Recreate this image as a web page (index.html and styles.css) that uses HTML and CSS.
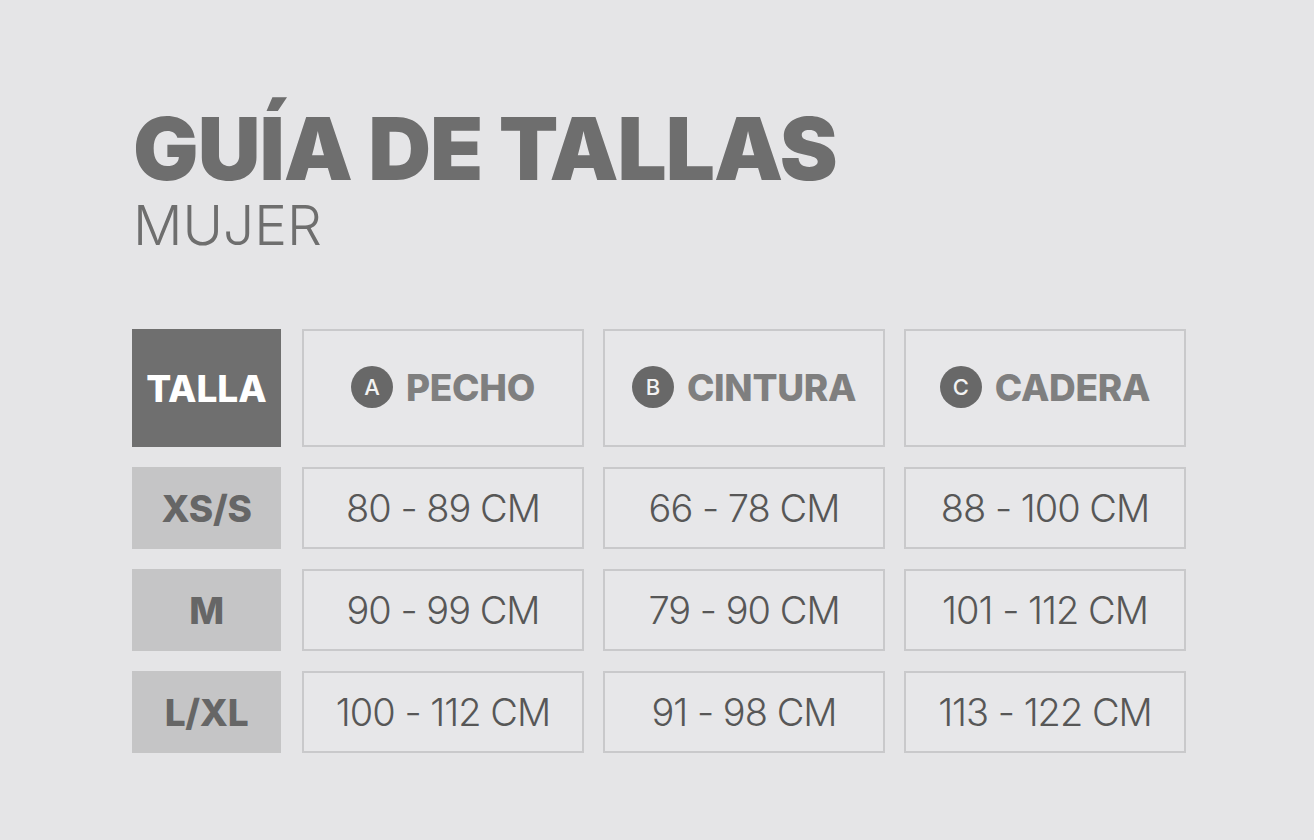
FILE: index.html
```html
<!DOCTYPE html>
<html lang="es">
<head>
<meta charset="utf-8">
<title>Guía de tallas</title>
<link rel="stylesheet" href="styles.css">
</head>
<body>
<main class="page">
  <h1 class="title">GUÍA DE TALLAS</h1>
  <p class="subtitle">MUJER</p>
  <div class="table">
    <div class="cell head-size">TALLA</div>
    <div class="cell head"><span class="badge">A</span><span>PECHO</span></div>
    <div class="cell head"><span class="badge">B</span><span>CINTURA</span></div>
    <div class="cell head"><span class="badge">C</span><span>CADERA</span></div>

    <div class="cell size">XS/S</div>
    <div class="cell value">80 - 89 CM</div>
    <div class="cell value">66 - 78 CM</div>
    <div class="cell value">88 - 100 CM</div>

    <div class="cell size">M</div>
    <div class="cell value">90 - 99 CM</div>
    <div class="cell value">79 - 90 CM</div>
    <div class="cell value">101 - 112 CM</div>

    <div class="cell size">L/XL</div>
    <div class="cell value">100 - 112 CM</div>
    <div class="cell value">91 - 98 CM</div>
    <div class="cell value">113 - 122 CM</div>
  </div>
</main>
</body>
</html>
```

FILE: styles.css
```css
html, body {
  margin: 0;
  padding: 0;
}
body {
  background: #e5e5e7;
  font-family: Inter, "Noto Sans", "Liberation Sans", sans-serif;
  width: 1314px;
  height: 840px;
  overflow: hidden;
}
.page {
  padding: 105px 0 0 132px;
}
.title {
  margin: 0 0 0 1px;
  font-size: 87px;
  line-height: 87px;
  font-weight: 900;
  color: #6e6e6e;
  letter-spacing: -1px;
}
.subtitle {
  margin: 6px 0 0 1px;
  font-size: 55px;
  line-height: 55px;
  font-weight: 300;
  color: #6e6e6e;
  letter-spacing: 0;
}
.table {
  margin-top: 76px;
  display: grid;
  grid-template-columns: 151px 282px 282px 282px;
  grid-template-rows: 118px 82px 82px 82px;
  column-gap: 19px;
  row-gap: 20px;
}
.cell {
  display: flex;
  align-items: center;
  justify-content: center;
  box-sizing: border-box;
}
.head-size {
  width: 149px;
  background: #6f6f6f;
  color: #ffffff;
  font-weight: 800;
  font-size: 37px;
  letter-spacing: 0;
}
.head {
  border: 2px solid #c9c9cb;
  background: #e7e7e9;
  color: #7f7f7f;
  font-weight: 800;
  font-size: 37px;
  letter-spacing: -0.3px;
  gap: 13px;
  padding-bottom: 2px;
}
.badge {
  width: 42px;
  height: 42px;
  border-radius: 50%;
  background: #686868;
  color: #f2f2f2;
  font-size: 22px;
  font-weight: 500;
  display: flex;
  align-items: center;
  justify-content: center;
  letter-spacing: 0;
}
.size {
  width: 149px;
  background: #c5c5c6;
  color: #666666;
  font-weight: 800;
  font-size: 37px;
  letter-spacing: -0.3px;
}
.value {
  border: 2px solid #c9c9cb;
  background: #e7e7e9;
  color: #575757;
  font-weight: 350;
  font-size: 38px;
  letter-spacing: -1px;
}
```
